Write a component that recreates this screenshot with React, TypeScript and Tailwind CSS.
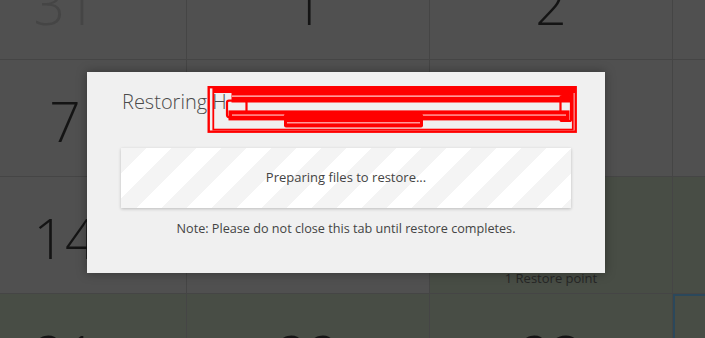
import React from 'react';

type Cell = { day: string; green?: boolean; faded?: boolean; today?: boolean; note?: string };

const rows: Cell[][] = [
  [{ day: '31', faded: true }, { day: '1' }, { day: '2' }, { day: '3' }],
  [{ day: '7' }, { day: '8' }, { day: '9' }, { day: '10' }],
  [{ day: '14' }, { day: '15' }, { day: '16', green: true, note: '1 Restore point' }, { day: '17', green: true }],
  [{ day: '21', green: true }, { day: '22', green: true }, { day: '23', green: true }, { day: '24', green: true, today: true }],
];

// red scribble that hides part of the dialog title
function Redaction() {
  return (
    <svg
      className="absolute left-[118px] top-[12px]"
      width="375"
      height="51"
      viewBox="205 84 375 51"
      fill="none"
    >
      <rect x="208.7" y="87.2" width="367" height="44.5" stroke="#ff0000" strokeWidth="2.4" />
      <rect x="213.3" y="88.6" width="359.5" height="41" stroke="#ff0000" strokeWidth="1.8" />
      <rect x="214" y="86" width="361" height="7" fill="#ff0000" />
      <rect x="231.5" y="92" width="341" height="10.5" fill="#ff0000" />
      <rect x="232" y="95.6" width="338" height="1" fill="#ffffff" />
      <rect x="227" y="100.6" width="19.5" height="16.5" rx="2" stroke="#ff0000" strokeWidth="2.2" />
      <rect x="560.5" y="96" width="10.5" height="25" rx="1.5" stroke="#ff0000" strokeWidth="2.2" />
      <rect x="228.5" y="110.4" width="341" height="10" fill="#ff0000" />
      <rect x="232" y="114.6" width="334" height="0.9" fill="#ffffff" />
      <rect x="284" y="113.6" width="139" height="14" rx="2" fill="#ff0000" />
      <rect x="287" y="122.4" width="133" height="0.9" fill="#ffffff" />
    </svg>
  );
}

export default function App() {
  return (
    <div className="relative w-[705px] h-[338px] overflow-hidden bg-[#505050] font-['Open_Sans','Noto_Sans',sans-serif]">
      <div className="ml-[-56px] mt-[-57px] grid grid-cols-[repeat(4,243px)] grid-rows-[repeat(4,117px)]">
        {rows.flat().map((c, i) => (
          <div
            key={i}
            className={
              'flex flex-col items-center border-r border-b border-[#454545] pb-[5px] ' +
              (c.green ? 'bg-[#484d45] ' : 'bg-[#505050] ') +
              (c.today ? 'border-l-2 border-t-2 border-l-[#2b485b] border-t-[#2b485b]' : '')
            }
          >
            <span
              className={
                'mt-[33px] text-[55px] font-light leading-none ' +
                (c.faded ? 'text-[#454545]' : 'text-[#141414]')
              }
            >
              {c.day}
            </span>
            {c.note && (
              <span className="mt-auto text-[13px] leading-[19px] text-[#262626]">{c.note}</span>
            )}
          </div>
        ))}
      </div>

      <div className="absolute left-[87px] top-[72px] w-[518px] h-[201px] bg-[#f0f0f0] shadow-[0_0_10px_rgba(0,0,0,0.35)] px-[34px] pt-[16px]">
        <h2 className="pl-px text-[20px] font-light leading-[28px] text-[#4a4a4a]">Restoring H</h2>
        <Redaction />
        <div className="mt-[32px] h-[60px] flex items-center justify-center bg-[repeating-linear-gradient(135deg,#f4f4f4_0px,#f4f4f4_17.7px,#ffffff_17.7px,#ffffff_35.4px)] shadow-[0_1px_3px_rgba(0,0,0,0.22)]">
          <span className="text-[13px] text-[#444444]">Preparing files to restore...</span>
        </div>
        <p className="mt-[11px] text-center text-[12.65px] text-[#444444]">
          Note: Please do not close this tab until restore completes.
        </p>
      </div>
    </div>
  );
}
